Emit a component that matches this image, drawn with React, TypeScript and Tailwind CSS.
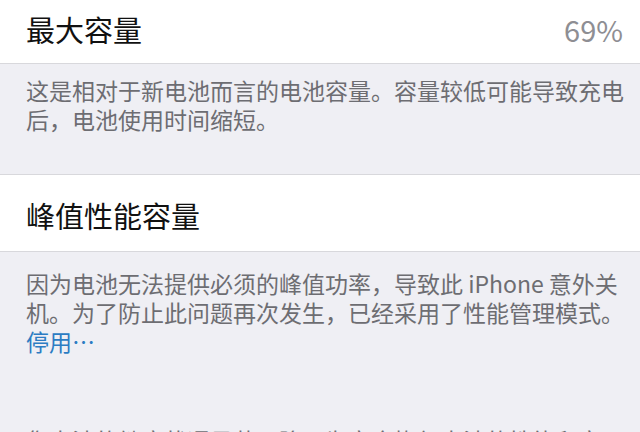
import React from 'react';

const font = { fontFamily: '"Noto Sans CJK SC", "Noto Sans", sans-serif' };

/**
 * 电池健康：最大容量 / 峰值性能容量
 */
export default function App() {
  return (
    <div className="w-[640px] h-[432px] overflow-hidden bg-[#efeff4]" style={font}>
      <div className="h-[64px] bg-white border-b border-[#d8d8dc] flex items-start justify-between pl-[26px] pr-[17px] pt-[14px]">
        <span className="text-[29px] leading-[30px] text-[#111]">最大容量</span>
        <span className="text-[29px] leading-[30px] text-[#8e8e93]">69%</span>
      </div>

      <div className="h-[110px] pl-[26px] pt-[12px] text-[23px] leading-[29px] text-[#6d6d72] whitespace-nowrap">
        这是相对于新电池而言的电池容量。容量较低可能导致充电
        <br />
        后，电池使用时间缩短。
      </div>

      <div className="h-[78px] bg-white border-y border-[#d8d8dc] pl-[26px] pt-[25px]">
        <span className="text-[29px] leading-[30px] text-[#111]">峰值性能容量</span>
      </div>

      <div className="pl-[26px] pt-[17px] text-[23px] leading-[29px] text-[#6d6d72] whitespace-nowrap">
        <p>
          因为电池无法提供必须的峰值功率，导致此 iPhone 意外关
          <br />
          机。为了防止此问题再次发生，已经采用了性能管理模式。
          <br />
          <span className="text-[#2c7cc3]">停用…</span>
        </p>
        <p className="mt-[70px]">您电池的健康状况显著下降，为完全恢复电池的性能和容</p>
      </div>
    </div>
  );
}
